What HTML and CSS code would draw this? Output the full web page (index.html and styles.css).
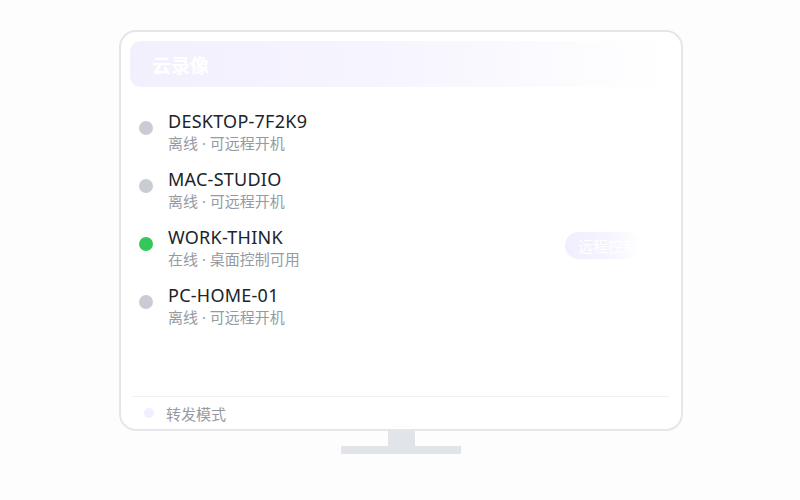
FILE: index.html
```html
<!DOCTYPE html>
<html lang="zh-CN">
<head>
<meta charset="utf-8">
<link rel="stylesheet" href="styles.css">
</head>
<body>
<div class="monitor">
  <div class="screen">
    <div class="header"><span class="title">云录像</span></div>
    <div class="list">
      <div class="row">
        <span class="dot"></span>
        <div class="info">
          <div class="name">DESKTOP-7F2K9</div>
          <div class="sub">离线 · 可远程开机</div>
        </div>
      </div>
      <div class="row">
        <span class="dot"></span>
        <div class="info">
          <div class="name">MAC-STUDIO</div>
          <div class="sub">离线 · 可远程开机</div>
        </div>
      </div>
      <div class="row">
        <span class="dot online"></span>
        <div class="info">
          <div class="name">WORK-THINK</div>
          <div class="sub">在线 · 桌面控制可用</div>
        </div>
        <span class="btn">远程控制</span>
      </div>
      <div class="row">
        <span class="dot"></span>
        <div class="info">
          <div class="name">PC-HOME-01</div>
          <div class="sub">离线 · 可远程开机</div>
        </div>
      </div>
    </div>
    <div class="footer">
      <span class="fdot"></span>
      <span class="ftext">转发模式</span>
    </div>
  </div>
  <div class="neck"></div>
  <div class="base"></div>
</div>
</body>
</html>
```
FILE: styles.css
```css
html, body {
  margin: 0;
  padding: 0;
  background: #fdfdfd;
  font-family: "Noto Sans", "Noto Sans CJK SC", sans-serif;
}
.monitor {
  width: 564px;
  margin: 30px 0 0 119px;
  display: flex;
  flex-direction: column;
  align-items: center;
}
.screen {
  box-sizing: border-box;
  width: 564px;
  height: 401px;
  border: 2px solid #e4e6ea;
  border-radius: 17px;
  background: #ffffff;
  padding: 9px 10px 0 9px;
  display: flex;
  flex-direction: column;
}
.header {
  height: 46px;
  border-radius: 11px;
  background: linear-gradient(90deg, #f3f0fe 0%, #f6f4fe 45%, #ffffff 100%);
  display: flex;
  align-items: center;
  padding-left: 22px;
}
.title {
  color: #ffffff;
  font-size: 19px;
  font-weight: 700;
  font-family: "Noto Sans CJK SC", sans-serif;
}
.list {
  flex: 1;
  padding: 23px 0 0 9px;
}
.row {
  display: flex;
  align-items: flex-start;
  height: 58px;
}
.dot {
  width: 14px;
  height: 14px;
  border-radius: 50%;
  background: #c9ccd3;
  margin-top: 11px;
  flex: none;
}
.dot.online {
  background: #35c75a;
}
.info {
  margin-left: 15px;
  flex: 1;
}
.name {
  font-size: 18px;
  line-height: 23px;
  color: #202328;
  letter-spacing: 0.25px;
}
.sub {
  font-size: 15px;
  line-height: 20px;
  color: #959aa3;
  font-family: "Noto Sans", "Noto Sans CJK SC", sans-serif;
}
.btn {
  margin: 6px 30px 0 0;
  height: 27px;
  line-height: 27px;
  padding: 0 3px 0 13px;
  border-radius: 14px;
  background: linear-gradient(90deg, #f1eefe 0%, #f5f3fe 55%, #ffffff 100%);
  color: #ffffff;
  font-size: 15px;
  font-family: "Noto Sans CJK SC", sans-serif;
}
.footer {
  margin: 0 2px 0 2px;
  border-top: 1px solid #eff0f3;
  height: 32px;
  display: flex;
  align-items: center;
}
.fdot {
  width: 10px;
  height: 10px;
  border-radius: 50%;
  background: #f1eefd;
  margin-left: 12px;
}
.ftext {
  margin-left: 12px;
  font-size: 15px;
  color: #959aa3;
  font-family: "Noto Sans CJK SC", sans-serif;
}
.neck {
  width: 27px;
  height: 15px;
  background: #e1e4e8;
}
.base {
  width: 120px;
  height: 8px;
  background: #e1e4e8;
}
```
